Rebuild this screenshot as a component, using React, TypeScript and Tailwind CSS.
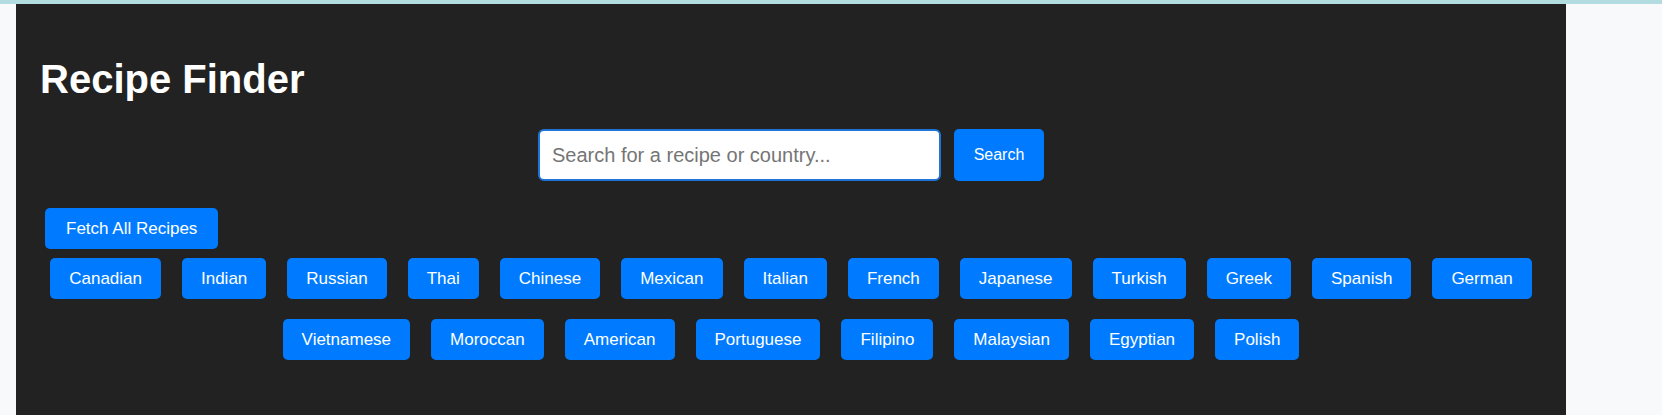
const CUISINES = [
  "Canadian",
  "Indian",
  "Russian",
  "Thai",
  "Chinese",
  "Mexican",
  "Italian",
  "French",
  "Japanese",
  "Turkish",
  "Greek",
  "Spanish",
  "German",
  "Vietnamese",
  "Moroccan",
  "American",
  "Portuguese",
  "Filipino",
  "Malaysian",
  "Egyptian",
  "Polish",
];

export default function App() {
  return (
    <div className="w-full h-[415px] overflow-hidden bg-[#f8f9fa] flex flex-col font-['Liberation_Sans',Arial,sans-serif]">
      {/* top strip */}
      <div className="h-[4px] shrink-0 bg-[#b3dce0]" />

      <div className="flex flex-1 pl-[16px] pr-[96px]">
        <main className="flex-1 bg-[#222222] px-[24px]">
          <h1 className="text-[40px] leading-[46px] font-bold text-white mt-[52px] mb-[27px]">
            Recipe Finder
          </h1>

          {/* Search */}
          <div className="flex justify-center gap-[13px]">
            <input
              type="text"
              placeholder="Search for a recipe or country..."
              className="w-[403px] h-[52px] bg-white border-2 border-[#1f74d6] rounded-[6px] pl-[12px] text-[20px] text-[#333] placeholder:text-[#757575] outline-none"
            />
            <button className="w-[90px] h-[52px] bg-[#007bff] text-white text-[16px] rounded-[5px] cursor-pointer">
              Search
            </button>
          </div>

          <div className="mt-[27px] ml-[5px]">
            <button className="h-[41px] px-[21px] bg-[#007bff] text-white text-[17px] rounded-[5px] cursor-pointer">
              Fetch All Recipes
            </button>
          </div>

          {/* Cuisines */}
          <div className="mt-[9px] flex flex-wrap justify-center gap-x-[21px] gap-y-[20px]">
            {CUISINES.map((c) => (
              <button
                key={c}
                className="h-[41px] px-[19px] bg-[#007bff] text-white text-[17px] rounded-[5px] cursor-pointer"
              >
                {c}
              </button>
            ))}
          </div>
        </main>
      </div>
    </div>
  );
}
